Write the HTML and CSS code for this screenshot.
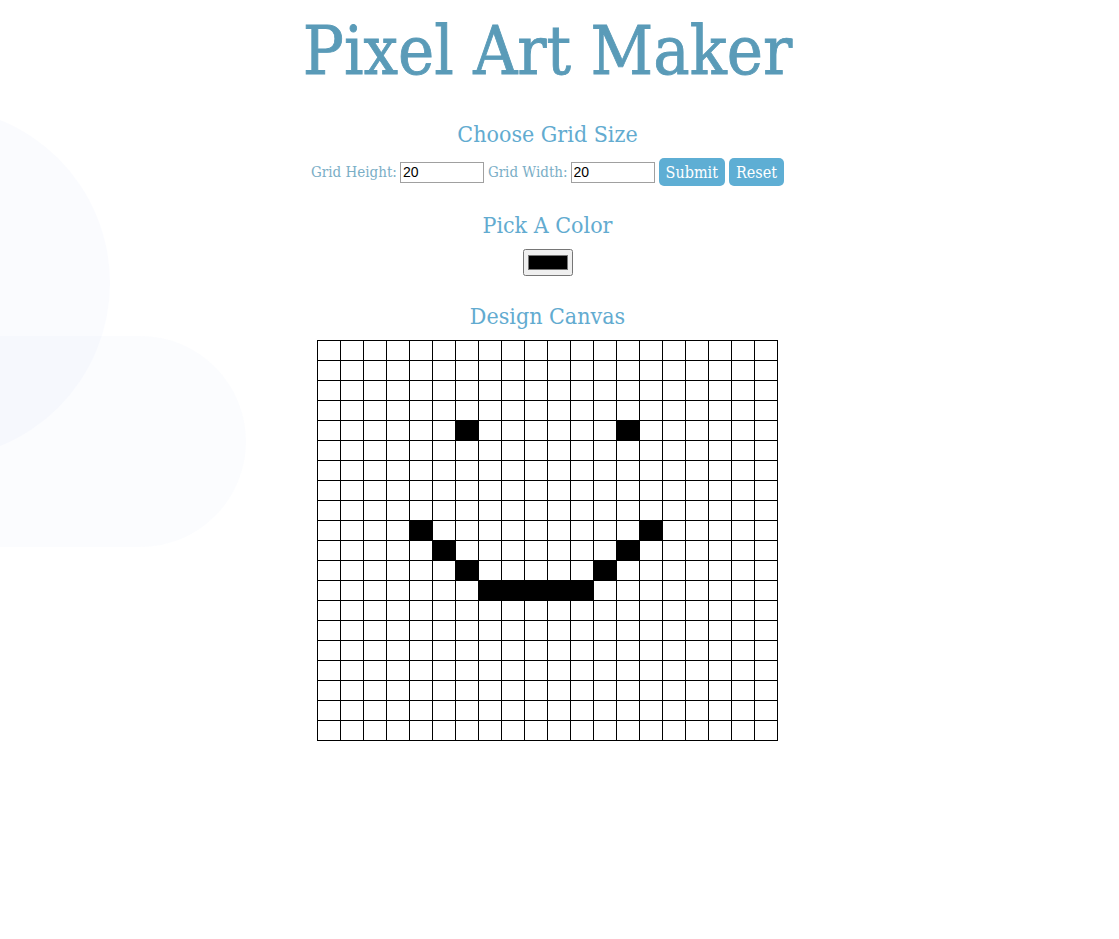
FILE: index.html
```html
<!DOCTYPE html>
<html>
<head>
<meta charset="utf-8">
<title>Pixel Art Maker</title>
<link rel="stylesheet" href="styles.css">
</head>
<body>
<div class="bg-circle"></div>
<div class="bg-pill"></div>
<main class="page">
  <h1 class="title">Pixel Art Maker</h1>
  <h2 class="heading heading-first">Choose Grid Size</h2>
  <form class="size-form">
    <label class="label">Grid Height:</label>
    <input class="num" type="text" value="20">
    <label class="label">Grid Width:</label>
    <input class="num" type="text" value="20">
    <button class="btn" type="button">Submit</button>
    <button class="btn" type="button">Reset</button>
  </form>
  <h2 class="heading">Pick A Color</h2>
  <input class="color" type="color" value="#000000">
  <h2 class="heading">Design Canvas</h2>
  <table class="canvas">
    <tr><td></td><td></td><td></td><td></td><td></td><td></td><td></td><td></td><td></td><td></td><td></td><td></td><td></td><td></td><td></td><td></td><td></td><td></td><td></td><td></td></tr>
    <tr><td></td><td></td><td></td><td></td><td></td><td></td><td></td><td></td><td></td><td></td><td></td><td></td><td></td><td></td><td></td><td></td><td></td><td></td><td></td><td></td></tr>
    <tr><td></td><td></td><td></td><td></td><td></td><td></td><td></td><td></td><td></td><td></td><td></td><td></td><td></td><td></td><td></td><td></td><td></td><td></td><td></td><td></td></tr>
    <tr><td></td><td></td><td></td><td></td><td></td><td></td><td></td><td></td><td></td><td></td><td></td><td></td><td></td><td></td><td></td><td></td><td></td><td></td><td></td><td></td></tr>
    <tr><td></td><td></td><td></td><td></td><td></td><td></td><td class="on"></td><td></td><td></td><td></td><td></td><td></td><td></td><td class="on"></td><td></td><td></td><td></td><td></td><td></td><td></td></tr>
    <tr><td></td><td></td><td></td><td></td><td></td><td></td><td></td><td></td><td></td><td></td><td></td><td></td><td></td><td></td><td></td><td></td><td></td><td></td><td></td><td></td></tr>
    <tr><td></td><td></td><td></td><td></td><td></td><td></td><td></td><td></td><td></td><td></td><td></td><td></td><td></td><td></td><td></td><td></td><td></td><td></td><td></td><td></td></tr>
    <tr><td></td><td></td><td></td><td></td><td></td><td></td><td></td><td></td><td></td><td></td><td></td><td></td><td></td><td></td><td></td><td></td><td></td><td></td><td></td><td></td></tr>
    <tr><td></td><td></td><td></td><td></td><td></td><td></td><td></td><td></td><td></td><td></td><td></td><td></td><td></td><td></td><td></td><td></td><td></td><td></td><td></td><td></td></tr>
    <tr><td></td><td></td><td></td><td></td><td class="on"></td><td></td><td></td><td></td><td></td><td></td><td></td><td></td><td></td><td></td><td class="on"></td><td></td><td></td><td></td><td></td><td></td></tr>
    <tr><td></td><td></td><td></td><td></td><td></td><td class="on"></td><td></td><td></td><td></td><td></td><td></td><td></td><td></td><td class="on"></td><td></td><td></td><td></td><td></td><td></td><td></td></tr>
    <tr><td></td><td></td><td></td><td></td><td></td><td></td><td class="on"></td><td></td><td></td><td></td><td></td><td></td><td class="on"></td><td></td><td></td><td></td><td></td><td></td><td></td><td></td></tr>
    <tr><td></td><td></td><td></td><td></td><td></td><td></td><td></td><td class="on"></td><td class="on"></td><td class="on"></td><td class="on"></td><td class="on"></td><td></td><td></td><td></td><td></td><td></td><td></td><td></td><td></td></tr>
    <tr><td></td><td></td><td></td><td></td><td></td><td></td><td></td><td></td><td></td><td></td><td></td><td></td><td></td><td></td><td></td><td></td><td></td><td></td><td></td><td></td></tr>
    <tr><td></td><td></td><td></td><td></td><td></td><td></td><td></td><td></td><td></td><td></td><td></td><td></td><td></td><td></td><td></td><td></td><td></td><td></td><td></td><td></td></tr>
    <tr><td></td><td></td><td></td><td></td><td></td><td></td><td></td><td></td><td></td><td></td><td></td><td></td><td></td><td></td><td></td><td></td><td></td><td></td><td></td><td></td></tr>
    <tr><td></td><td></td><td></td><td></td><td></td><td></td><td></td><td></td><td></td><td></td><td></td><td></td><td></td><td></td><td></td><td></td><td></td><td></td><td></td><td></td></tr>
    <tr><td></td><td></td><td></td><td></td><td></td><td></td><td></td><td></td><td></td><td></td><td></td><td></td><td></td><td></td><td></td><td></td><td></td><td></td><td></td><td></td></tr>
    <tr><td></td><td></td><td></td><td></td><td></td><td></td><td></td><td></td><td></td><td></td><td></td><td></td><td></td><td></td><td></td><td></td><td></td><td></td><td></td><td></td></tr>
    <tr><td></td><td></td><td></td><td></td><td></td><td></td><td></td><td></td><td></td><td></td><td></td><td></td><td></td><td></td><td></td><td></td><td></td><td></td><td></td><td></td></tr>
  </table>
</main>
</body>
</html>
```
FILE: styles.css
```css
html, body {
  margin: 0;
  padding: 0;
  background: #ffffff;
}
body {
  font-family: "DejaVu Serif Condensed", "DejaVu Serif", "Liberation Serif", serif;
  min-height: 939px;
  position: relative;
  overflow: hidden;
}
.bg-circle {
  position: absolute;
  left: -242px;
  top: 107px;
  width: 352px;
  height: 352px;
  border-radius: 50%;
  background: rgba(215, 224, 245, 0.13);
}
.bg-pill {
  position: absolute;
  left: -200px;
  top: 336px;
  width: 446px;
  height: 211px;
  border-radius: 106px;
  background: rgba(215, 224, 245, 0.1);
}
.page {
  position: relative;
  width: 1095px;
  display: flex;
  flex-direction: column;
  align-items: center;
}
.title {
  margin: 11px 0 0;
  font-size: 68px;
  line-height: 80px;
  font-weight: normal;
  color: #5a9bb8;
  -webkit-text-stroke: 0.8px #5a9bb8;
}
.heading {
  margin: 0;
  font-size: 23px;
  line-height: 28px;
  font-weight: normal;
  color: #62abd0;
}
.heading-first {
  margin-top: 29px;
}
.size-form {
  display: flex;
  align-items: center;
  gap: 4px;
  margin: 10px 0 25px;
}
.label {
  font-size: 15px;
  color: #7aaec6;
  margin-right: -1px;
}
.num {
  width: 78px;
  height: 17px;
  padding: 1px 2px;
  border: 1px solid #a0a0a0;
  font-family: "Liberation Sans", Arial, sans-serif;
  font-size: 14px;
  color: #000;
}
.btn {
  height: 28px;
  padding: 0 7px;
  border: none;
  border-radius: 5px;
  background: #5eaed4;
  color: #ffffff;
  font-family: "DejaVu Serif Condensed", "DejaVu Serif", serif;
  font-size: 16px;
}
.color {
  width: 50px;
  height: 27px;
  margin: 10px 0 26px;
}
.canvas {
  margin-top: 10px;
  border-collapse: collapse;
  border: 1px solid #000;
}
.canvas td {
  width: 22px;
  height: 19px;
  padding: 0;
  border: 1px solid #000;
  background: #fff;
}
.canvas td.on {
  background: #000;
}
```
